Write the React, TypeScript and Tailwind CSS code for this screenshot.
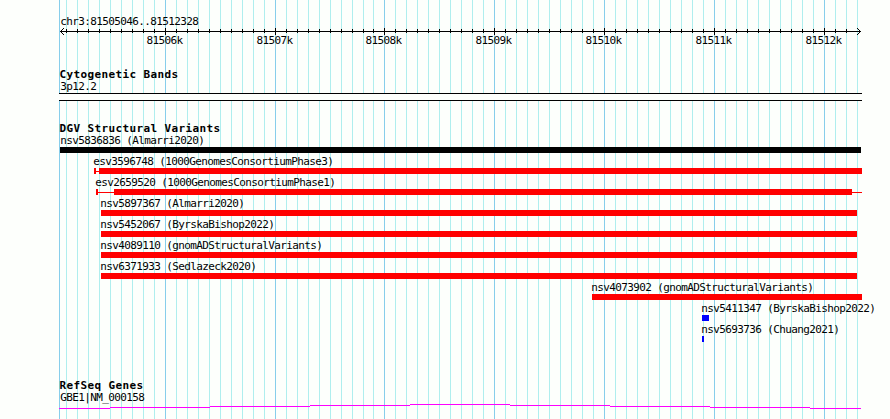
const MAJOR = [59, 165, 275, 384, 494, 604, 714, 824];

const MINOR = [
  ...Array.from({ length: 28 }, (_, i) => 66 + i * 11),
  ...Array.from({ length: 45 }, (_, i) => 373 + i * 11),
].filter((x) => !MAJOR.includes(x));

const TICKS = [
  { label: "81506k", width: 110 },
  { label: "81507k", width: 109 },
  { label: "81508k", width: 110 },
  { label: "81509k", width: 110 },
  { label: "81510k", width: 110 },
  { label: "81511k", width: 110 },
  { label: "81512k", width: 36 },
];

type Part = { w: number; kind: "bar" | "line" };

type Variant = {
  name: string;
  labelX: number;
  x: number;
  color: string;
  parts: Part[];
};

const VARIANTS: Variant[] = [
  { name: "nsv5836836 (Almarri2020)", labelX: 60.3, x: 60, color: "bg-black", parts: [{ w: 801, kind: "bar" }] },
  {
    name: "esv3596748 (1000GenomesConsortiumPhase3)",
    labelX: 93.3,
    x: 94,
    color: "bg-[#ff0000]",
    parts: [{ w: 2, kind: "bar" }, { w: 3, kind: "line" }, { w: 763, kind: "bar" }],
  },
  {
    name: "esv2659520 (1000GenomesConsortiumPhase1)",
    labelX: 95.3,
    x: 96,
    color: "bg-[#ff0000]",
    parts: [
      { w: 2, kind: "bar" },
      { w: 16, kind: "line" },
      { w: 738, kind: "bar" },
      { w: 10, kind: "line" },
    ],
  },
  { name: "nsv5897367 (Almarri2020)", labelX: 100.3, x: 101, color: "bg-[#ff0000]", parts: [{ w: 756, kind: "bar" }] },
  { name: "nsv5452067 (ByrskaBishop2022)", labelX: 100.3, x: 101, color: "bg-[#ff0000]", parts: [{ w: 756, kind: "bar" }] },
  { name: "nsv4089110 (gnomADStructuralVariants)", labelX: 100.3, x: 101, color: "bg-[#ff0000]", parts: [{ w: 756, kind: "bar" }] },
  { name: "nsv6371933 (Sedlazeck2020)", labelX: 100.3, x: 101, color: "bg-[#ff0000]", parts: [{ w: 756, kind: "bar" }] },
  { name: "nsv4073902 (gnomADStructuralVariants)", labelX: 591.3, x: 592, color: "bg-[#ff0000]", parts: [{ w: 270, kind: "bar" }] },
  { name: "nsv5411347 (ByrskaBishop2022)", labelX: 701.3, x: 702, color: "bg-[#0000ff]", parts: [{ w: 7, kind: "bar" }] },
  { name: "nsv5693736 (Chuang2021)", labelX: 701.3, x: 702, color: "bg-[#0000ff]", parts: [{ w: 2, kind: "bar" }] },
];

function Grid() {
  return (
    <svg className="absolute inset-0" width="890" height="419" shapeRendering="crispEdges">
      {MINOR.map((x) => (
        <rect key={x} x={x} y={0} width={1} height={419} fill="#afeeee" />
      ))}
      {MAJOR.map((x) => (
        <rect key={x} x={x} y={0} width={1} height={419} fill="#87ceeb" />
      ))}
    </svg>
  );
}

function Axis() {
  return (
    <svg className="block" width="890" height="7" shapeRendering="crispEdges">
      <rect x={60} y={3} width={801} height={1} />
      {MINOR.filter((x) => x < 850).map((x) => (
        <rect key={x} x={x} y={1} width={1} height={4} />
      ))}
      {MAJOR.slice(1).map((x) => (
        <rect key={x} x={x} y={0} width={1} height={7} />
      ))}
      {/* arrow heads, one pixel per step */}
      {[1, 2, 3].map((i) => (
        <g key={i}>
          <rect x={60 + i} y={3 - i} width={1} height={1} />
          <rect x={60 + i} y={3 + i} width={1} height={1} />
          <rect x={860 - i} y={3 - i} width={1} height={1} />
          <rect x={860 - i} y={3 + i} width={1} height={1} />
        </g>
      ))}
    </svg>
  );
}

function TrackTitle({ children }: { children: string }) {
  return <h2 className="h-3 pl-[59.5px] font-bold leading-[17px] tracking-[0.378px]">{children}</h2>;
}

function VariantRow({ variant }: { variant: Variant }) {
  return (
    <div className="h-[21px]">
      <div className="h-[15px] leading-[17px]" style={{ paddingLeft: variant.labelX }}>
        {variant.name}
      </div>
      <div className="flex h-1.5 items-center" style={{ paddingLeft: variant.x }}>
        {variant.parts.map((part, i) => (
          <div
            key={i}
            className={`shrink-0 ${variant.color} ${part.kind === "bar" ? "h-1.5" : "mt-px h-px"}`}
            style={{ width: part.w }}
          />
        ))}
      </div>
    </div>
  );
}

export default function App() {
  return (
    <div className="relative h-[419px] w-[890px] overflow-hidden whitespace-nowrap bg-[#fdfffc] font-['DejaVu_Sans_Mono',monospace] text-[11px] tracking-[-0.622px] text-black">
      <Grid />
      <main className="relative pt-[13px]">
        <header className="h-[53px]">
          <div className="h-[15px] pl-[60.3px] leading-[17px]">chr3:81505046..81512328</div>
          <Axis />
          <div className="-mt-[3px] flex pl-[146.5px] leading-[17px]">
            {TICKS.map((tick) => (
              <span key={tick.label} className="shrink-0" style={{ width: tick.width }}>
                {tick.label}
              </span>
            ))}
          </div>
        </header>

        <section className="h-[54px]">
          <TrackTitle>Cytogenetic Bands</TrackTitle>
          <div className="h-[15px] pl-[60.3px] leading-[17px]">3p12.2</div>
          <div className="ml-[59px] h-2 w-[803px] border-y border-black bg-[#fdfffc]" />
        </section>

        <section className="h-[257px]">
          <TrackTitle>DGV Structural Variants</TrackTitle>
          {VARIANTS.map((variant) => (
            <VariantRow key={variant.name} variant={variant} />
          ))}
        </section>

        <section>
          <TrackTitle>RefSeq Genes</TrackTitle>
          <div className="h-[15px] pl-[60.3px] leading-[17px]">GBE1|NM_000158</div>
          <svg className="block" width="890" height="5" shapeRendering="crispEdges">
            {[4, 3, 2, 1, 0, 1, 2, 3, 4].map((y, i) => {
              const start = i === 0 ? 59 : 10 + i * 100;
              const end = i === 8 ? 861 : 110 + i * 100;
              return <rect key={i} x={start} y={y} width={end - start} height={1} fill="#ff00ff" />;
            })}
          </svg>
        </section>
      </main>
    </div>
  );
}
